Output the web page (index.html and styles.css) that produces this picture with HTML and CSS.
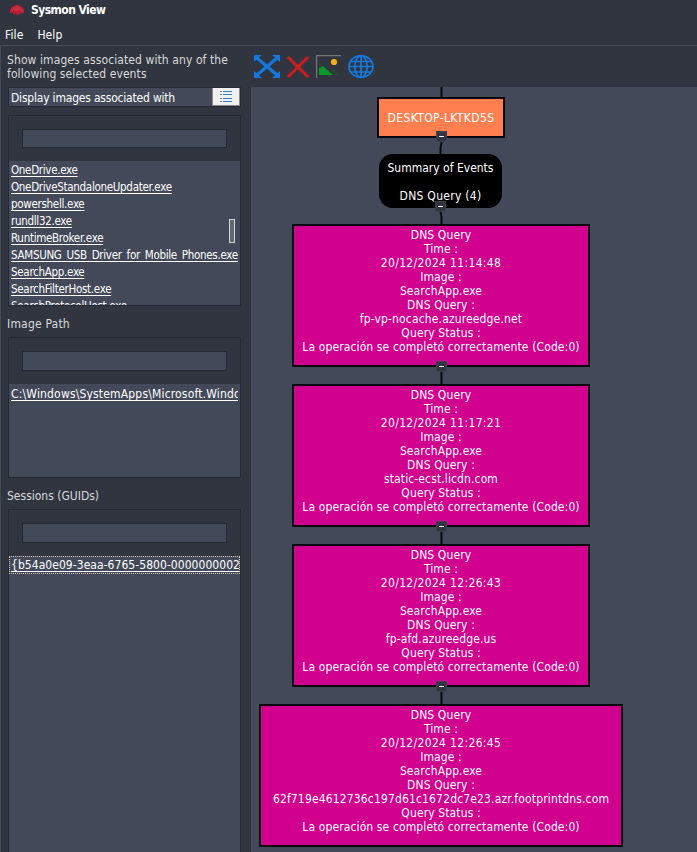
FILE: index.html
```html
<!DOCTYPE html>
<html lang="en">
<head>
<meta charset="utf-8">
<title>Sysmon View</title>
<link rel="stylesheet" href="styles.css">
</head>
<body>
<div class="window">
  <header class="titlebar">
    <svg class="logo" width="16" height="12" viewBox="0 0 16 12"><path d="M1 6Q2 3 4 2.500Q8-1 12 2.500Q14 3 15 6V9H12L10.500 10.500H5.500L4 9H1Z" fill="#b91f35"/><path d="M3 7L5 4M6 7V3M8 7V2M10 7V3M13 7L11 4" stroke="#df3f50" stroke-width=".8"/><path d="M3 8.500L5 7M6.500 10L7 8M11 9L10 7" stroke="#8a182a" stroke-width=".8"/></svg>
    <span class="title">Sysmon View</span>
  </header>
  <nav class="menu"><span>File</span><span>Help</span></nav>
  <div class="main">
    <aside class="side">
      <p class="hint"><span>Show images associated with any of the</span><br><span>following selected events</span></p>
      <div class="combo"><span class="combo-text">Display images associated with</span>
        <span class="combo-btn"><svg width="14" height="11" viewBox="0 0 14 11"><path d="M1 .5h2M1 3.5h2M1 7.5h2M1 10.5h2" stroke="#777f8c"/><path d="M4 .5h9M4 3.5h9M4 7.5h9M4 10.5h9" stroke="#2f7fd0"/></svg></span>
      </div>
      <section class="panel images">
        <div class="filter"><div class="field"></div></div>
        <div class="list">
          <a>OneDrive.exe</a><a>OneDriveStandaloneUpdater.exe</a><a>powershell.exe</a><a>rundll32.exe</a><a>RuntimeBroker.exe</a><a>SAMSUNG_USB_Driver_for_Mobile_Phones.exe</a><a>SearchApp.exe</a><a>SearchFilterHost.exe</a><a>SearchProtocolHost.exe</a>
          <i class="thumb"></i>
        </div>
      </section>
      <h2 class="label path-label">Image Path</h2>
      <section class="panel paths">
        <div class="filter"><div class="field"></div></div>
        <div class="list"><a class="path">C:\Windows\SystemApps\Microsoft.Windo</a></div>
      </section>
      <h2 class="label guid-label">Sessions (GUIDs)</h2>
      <section class="panel guids">
        <div class="filter"><div class="field"></div></div>
        <div class="list"><a class="guid">{b54a0e09-3eaa-6765-5800-0000000002</a></div>
      </section>
    </aside>
    <section class="view">
      <div class="tools">
        <svg width="26" height="24" viewBox="0 0 26 24" fill="none" stroke="#1379df"><path d="M3 3L23 20M23 3L3 20" stroke-width="3"/><path d="M0 0H8L0 7ZM26 0H18L26 7ZM0 23H8L0 16ZM26 23H18L26 16Z" fill="#1379df" stroke="none"/></svg>
        <svg width="24" height="24" viewBox="0 0 24 24"><path d="M2 2L22 22M22 2L2 22" stroke="#d11c1c" stroke-width="3"/></svg>
        <svg width="26" height="24" viewBox="0 0 26 24"><path d="M0 .5H25M.5 0V23" fill="none" stroke="#74767a" stroke-width="1.4"/><path d="M3 20V13L7 11L17 20Z" fill="#079a2a"/><path d="M15 15L18 14L23 20H20Z" fill="#224a35"/><circle cx="18" cy="7" r="3.1" fill="#ffad16"/></svg>
        <svg width="26" height="24" viewBox="0 0 26 24" fill="none" stroke="#1379df" stroke-width="1.7"><ellipse cx="13" cy="11.500" rx="12" ry="10.800"/><ellipse cx="13" cy="11.500" rx="6.2" ry="10.800"/><path d="M13 1V22M1 11.500H25M3 6.500H23M3 17H23"/></svg>
      </div>
      <div class="canvas">
        <svg class="edges" width="446" height="765" viewBox="251 87 446 765" fill="none" stroke="#08090b" stroke-width="2"><path d="M441.5 87V98M441.5 136V143L440.5 148V156M440.5 206V212L441.5 217V226M441.5 366V386M441.5 526V546M441.5 686V706"/></svg>
        <div class="node host">DESKTOP-LKTKD5S</div>
        <div class="node summary"><span>Summary of Events</span><br><br><span class="count">DNS Query (4)</span></div>
        <div class="node event e1"><span>DNS Query</span><span>Time :</span><span class="dt">20/12/2024 11:14:48</span><span>Image :</span><span>SearchApp.exe</span><span>DNS Query :</span><span class="domain">fp-vp-nocache.azureedge.net</span><span>Query Status :</span><span>La operación se completó correctamente (Code:0)</span></div>
        <div class="node event e2"><span>DNS Query</span><span>Time :</span><span class="dt">20/12/2024 11:17:21</span><span>Image :</span><span>SearchApp.exe</span><span>DNS Query :</span><span>static-ecst.licdn.com</span><span>Query Status :</span><span>La operación se completó correctamente (Code:0)</span></div>
        <div class="node event e3"><span>DNS Query</span><span>Time :</span><span class="dt">20/12/2024 12:26:43</span><span>Image :</span><span>SearchApp.exe</span><span>DNS Query :</span><span>fp-afd.azureedge.us</span><span>Query Status :</span><span>La operación se completó correctamente (Code:0)</span></div>
        <div class="node event e4"><span>DNS Query</span><span>Time :</span><span class="dt">20/12/2024 12:26:45</span><span>Image :</span><span>SearchApp.exe</span><span>DNS Query :</span><span class="domain">62f719e4612736c197d61c1672dc7e23.azr.footprintdns.com</span><span>Query Status :</span><span>La operación se completó correctamente (Code:0)</span></div>
        <i class="fold f1"></i><i class="fold f2"></i><i class="fold f3"></i><i class="fold f4"></i><i class="fold f5"></i>
      </div>
    </section>
  </div>
</div>
</body>
</html>
```
FILE: styles.css
```css
* { box-sizing: border-box; }
body { margin: 0; overflow: hidden; background: #31353f; color: #fff; font: 12px/14px Tahoma, "DejaVu Sans Condensed", "DejaVu Sans", sans-serif; font-stretch: condensed; }
.window { width: 697px; height: 852px; display: flex; flex-direction: column; white-space: nowrap; }
.titlebar { height: 24px; display: flex; padding: 4px 0 0 9px; gap: 6px; }
.title { font-weight: bold; line-height: 13px; letter-spacing: -.55px; }
.menu { height: 21px; display: flex; gap: 14px; padding: 4px 5px 0; letter-spacing: .1px; }
.main { flex: 1; min-height: 0; display: flex; border-top: 1px solid #454a57; border-left: 1px solid #454a57; }
.side { width: 250px; padding: 7px 10px 0 7px; display: flex; flex-direction: column; flex: none; }
.hint { margin: 0 0 6px -1px; color: #d8d9dc; height: 28px; letter-spacing: .09px; }
.combo { height: 20px; display: flex; border: 1px solid #252934; background: #434959; flex: none; }
.combo-text { flex: 1; padding: 3px 0 0 2px; letter-spacing: -.2px; }
.combo-btn { width: 28px; background: #f0f0f0; border: 1px solid #888; border-top: 0; display: flex; align-items: center; justify-content: center; }
.panel { border: 1px solid #252934; flex: none; display: flex; flex-direction: column; width: 233px; }
.filter { height: 46px; padding: 13px; flex: none; }
.field { height: 20px; border: 1px solid #252934; background: #434959; }
.list { flex: 1; min-height: 0; background: #434959; overflow: hidden; position: relative; padding: 1px 2px 0 2px; }
.list a { display: block; width: fit-content; text-decoration: underline; text-underline-offset: 2px; line-height: 17px; height: 17px; }
.images { height: 191px; margin-top: 8px; }
.images .filter { height: 45px; }
.images .field { height: 19px; }
.images .list { font-size: 11.5px; letter-spacing: -.3px; }
.paths { height: 141px; }
.guids { height: 350px; }
.label { margin: 0 0 0 -1px; font-size: 12px; line-height: 14px; font-weight: normal; color: #d8d9dc; }
.path-label { padding: 11px 0 6px; letter-spacing: .2px; }
.guid-label { padding: 11px 0 6px; }
.thumb { position: absolute; left: 220px; top: 58px; width: 6px; height: 24px; border: 1px solid #d5d6d9; background: #62666f; }
.paths .list { padding-top: 2px; }
.list .path { max-width: 227px; overflow: hidden; letter-spacing: .17px; }
.list .guid { width: 231px; margin: 0 0 0 -2px; padding-left: 1px; border: 1px dotted #d8ceb9; overflow: hidden; line-height: 17px; height: 18px; letter-spacing: .05px; }
.guids .list { padding-top: 0; }
.view { flex: 1; min-width: 0; display: flex; flex-direction: column; }
.tools { height: 41px; display: flex; padding: 9px 0 0 3px; gap: 6px; flex: none; }
.canvas { flex: 1; background: #434959; position: relative; overflow: hidden; }
.edges { position: absolute; left: 0; top: 0; }
.node { position: absolute; text-align: center; }
.host { left: 126px; top: 10px; width: 128px; height: 41px; border: 2px solid #08090b; background: #ff7f50; padding-top: 12px; letter-spacing: .37px; }
.summary { left: 128px; top: 67px; width: 123px; height: 54px; border-radius: 14px; background: #000; padding-top: 7px; }
.count { letter-spacing: .28px; }
.event { left: 41px; width: 298px; height: 143px; border: 2px solid #08090b; background: #d1008f; padding-top: 2px; display: flex; flex-direction: column; align-items: center; letter-spacing: .12px; }
.event .dt { letter-spacing: .33px; }
.event .domain { letter-spacing: .15px; }
.e1 { top: 137px; }
.e2 { top: 297px; }
.e3 { top: 457px; }
.e4 { top: 617px; left: 8px; width: 364px; }
.fold { position: absolute; left: 185px; width: 11px; height: 11px; background: #31353f; border: 1px solid #3c414d; }
.fold::after { content: ""; display: block; width: 5px; height: 1px; margin: 4px 0 0 2px; background: #fff; }
.f1 { top: 44px; }
.f2 { top: 114px; left: 184px; }
.f3 { top: 274px; }
.f4 { top: 434px; }
.f5 { top: 594px; }
```
